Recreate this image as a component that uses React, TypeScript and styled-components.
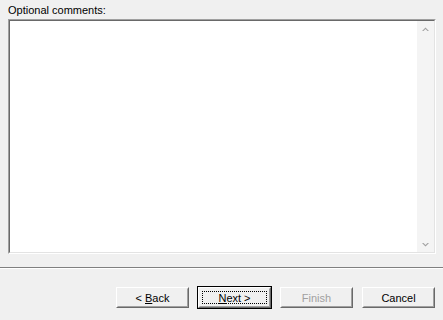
import styled, { createGlobalStyle } from 'styled-components'

const Global = createGlobalStyle`
  html, body { margin: 0; padding: 0; background: #f0f0f0; }
  body { font-family: Tahoma, "Liberation Sans", Arial, sans-serif; font-size: 11px; color: #000; }
`

const Page = styled.div`
  width: 443px;
  height: 320px;
  display: flex;
  flex-direction: column;
  background: #f0f0f0;
  box-sizing: border-box;
`

const Body = styled.div`
  padding: 4px 7px 0 8px;
  display: flex;
  flex-direction: column;
`

const Label = styled.div`
  height: 15px;
  line-height: 12px;
`

const Memo = styled.div`
  height: 235px;
  box-sizing: border-box;
  border-style: solid;
  border-width: 1px;
  border-color: #a0a0a0 #ffffff #ffffff #a0a0a0;
  display: flex;
`

const MemoInner = styled.div`
  flex: 1;
  display: flex;
  border-style: solid;
  border-width: 1px;
  border-color: #696969 #e3e3e3 #e3e3e3 #696969;
  background: #fff;
`

const Text = styled.div`
  flex: 1;
`

const ScrollBar = styled.div`
  width: 17px;
  background: #f4f4f4;
  border-left: 1px solid #fff;
  display: flex;
  flex-direction: column;
  justify-content: space-between;
  align-items: center;
  padding: 6px 0 5px;
`

const Separator = styled.div`
  margin-top: 13px;
  height: 1px;
  background: #808080;
  border-bottom: 1px solid #ffffff;
`

const ButtonRow = styled.div`
  display: flex;
  justify-content: flex-end;
  gap: 7px;
  padding: 17px 7px 0 0;
`

const Button = styled.div<{ $default?: boolean }>`
  width: 75px;
  height: 23px;
  box-sizing: border-box;
  border: 1px solid ${p => (p.$default ? '#000' : 'transparent')};
  display: flex;
`

const Face = styled.div`
  flex: 1;
  display: flex;
  border-style: solid;
  border-width: 1px;
  border-color: #ffffff #696969 #696969 #ffffff;
`

const FaceInner = styled.div<{ $disabled?: boolean; $focus?: boolean }>`
  flex: 1;
  display: flex;
  align-items: center;
  justify-content: center;
  border-style: solid;
  border-width: 1px;
  border-color: #f0f0f0 #a0a0a0 #a0a0a0 #f0f0f0;
  color: ${p => (p.$disabled ? '#a0a0a0' : '#000')};
  position: relative;
  &::after {
    content: '';
    display: ${p => (p.$focus ? 'block' : 'none')};
    position: absolute;
    inset: 2px;
    border: 1px dotted #000;
  }
`

const Caption = styled.span`
  u { text-decoration: underline; text-underline-offset: 1px; }
`

const Arrow = ({ up }: { up?: boolean }) => (
  <svg width="7" height="4" viewBox="0 0 7 4">
    <path d={up ? 'M0 4 L3.5 0.5 L7 4 L5.5 4 L3.5 2 L1.5 4 Z' : 'M0 0 L3.5 3.5 L7 0 L5.5 0 L3.5 2 L1.5 0 Z'} fill="#a0a0a0" />
  </svg>
)

export default function App() {
  return (
    <Page>
      <Global />
      <Body>
        <Label>Optional comments:</Label>
        <Memo>
          <MemoInner>
            <Text />
            <ScrollBar>
              <Arrow up />
              <Arrow />
            </ScrollBar>
          </MemoInner>
        </Memo>
      </Body>
      <Separator />
      <ButtonRow>
        <Button>
          <Face>
            <FaceInner>
              <Caption>&lt; <u>B</u>ack</Caption>
            </FaceInner>
          </Face>
        </Button>
        <Button $default>
          <Face>
            <FaceInner $focus>
              <Caption><u>N</u>ext &gt;</Caption>
            </FaceInner>
          </Face>
        </Button>
        <Button>
          <Face>
            <FaceInner $disabled>
              <Caption>Finish</Caption>
            </FaceInner>
          </Face>
        </Button>
        <Button>
          <Face>
            <FaceInner>
              <Caption>Cancel</Caption>
            </FaceInner>
          </Face>
        </Button>
      </ButtonRow>
    </Page>
  )
}
